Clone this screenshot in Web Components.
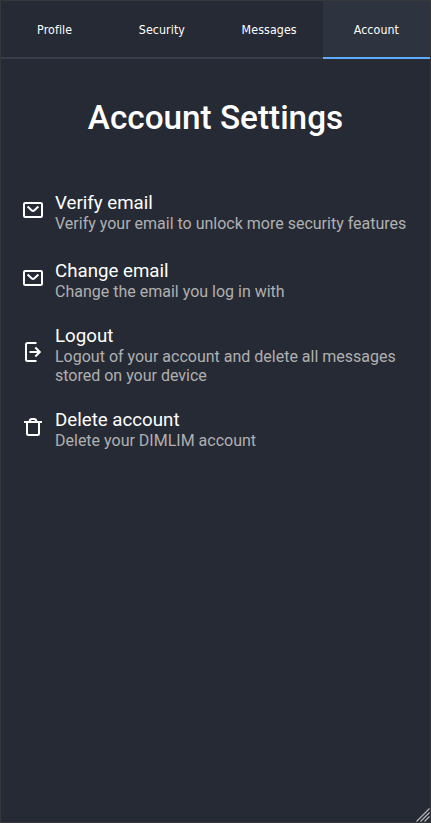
<!DOCTYPE html>
<html lang="en"><head><meta charset="utf-8"><title>Account Settings</title>
<style>html,body{margin:0;background:#262a34}</style></head><body>
<settings-app></settings-app>
<script>
class TabItem extends HTMLElement{
 constructor(){super();this.attachShadow({mode:'open'}).innerHTML=`<style>
 :host{display:flex;flex:1 1 0;align-items:center;justify-content:center;box-sizing:border-box;height:58px;padding-top:2px;border-bottom:2px solid #393d4b;font:12.300px "DejaVu Sans Condensed","DejaVu Sans",sans-serif;font-stretch:condensed;letter-spacing:.1px;color:#fff}
 :host([active]){background:#2d333f;border-color:#5eacff}
 span{white-space:nowrap}
 </style><span><slot></slot></span>`}}
customElements.define('tab-item',TabItem);

const ICONS={
 mail:'<rect x="3" y="5" width="18" height="14" rx="1.2"/><path d="M6.600 8.500l4.200 3.900q1.200 1 2.400 0l4.200-3.900"/>',
 logout:'<path d="M15.500 3H6.500Q5 3 5 4.500v15Q5 21 6.500 21h9M8.500 12H19M14.300 7.500L18.800 12l-4.500 4.500"/>',
 trash:'<path d="M3 7h18M6 7v11.500Q6 20 7.500 20h9q1.500 0 1.500-1.500V7M8.500 6.500Q8.800 4 11 4h2q2.200 0 2.500 2.500"/>'};
class AppIcon extends HTMLElement{
 constructor(){super();this.attachShadow({mode:'open'})}
 connectedCallback(){this.shadowRoot.innerHTML=`<style>:host{display:block;width:24px;height:24px}svg{display:block}</style>
 <svg width="24" height="24" viewBox="0 0 24 24" fill="none" stroke="#fff" stroke-width="2">${ICONS[this.getAttribute('name')]}</svg>`}}
customElements.define('app-icon',AppIcon);

class SettingRow extends HTMLElement{
 constructor(){super();this.attachShadow({mode:'open'})}
 connectedCallback(){this.shadowRoot.innerHTML=`<style>
 :host{display:flex;column-gap:10px;align-items:flex-start;font-family:Roboto,sans-serif}
 app-icon{flex:none;margin-top:var(--icon-top,6px)}
 .title{font-size:18.72px;line-height:22px;color:#fff}
 .note{font-size:16px;line-height:19px;color:#b0b0b0}
 </style><app-icon name="${this.getAttribute('icon')}"></app-icon>
 <div><div class="title"><slot name="title"></slot></div><div class="note"><slot></slot></div></div>`}}
customElements.define('setting-row',SettingRow);

class SettingsApp extends HTMLElement{
 constructor(){super();this.attachShadow({mode:'open'}).innerHTML=`<style>
 :host{display:block;position:relative;box-sizing:border-box;width:431px;height:823px;border:1px solid #36373b;background:#262a34;overflow:hidden}
 nav{display:flex}
 h1{margin:40px 0 0;font:500 33.300px/38px Roboto,sans-serif;text-align:center;color:#fff}
 main{display:flex;flex-direction:column;padding:55px 20px 0}
 .grip{position:absolute;right:0;bottom:0}
 </style>
 <nav><tab-item>Profile</tab-item><tab-item>Security</tab-item><tab-item>Messages</tab-item><tab-item active>Account</tab-item></nav>
 <h1>Account Settings</h1>
 <main>
 <setting-row icon="mail" style="margin-bottom:27px"><span slot="title">Verify email</span>Verify your email to unlock more security features</setting-row>
 <setting-row icon="mail" style="margin-bottom:24px"><span slot="title">Change email</span>Change the email you log in with</setting-row>
 <setting-row icon="logout" style="margin-bottom:24px;--icon-top:15px"><span slot="title">Logout</span>Logout of your account and delete all messages stored on your device</setting-row>
 <setting-row icon="trash"><span slot="title">Delete account</span>Delete your DIMLIM account</setting-row>
 </main>
 <svg class="grip" width="14" height="14" viewBox="0 0 14 14" stroke="#b5b6b9" stroke-width="1.200"><path d="M.5 13.500l13-13M4.500 13.500l9-9M8.500 13.500l5-5"/></svg>`}}
customElements.define('settings-app',SettingsApp);
</script></body></html>
